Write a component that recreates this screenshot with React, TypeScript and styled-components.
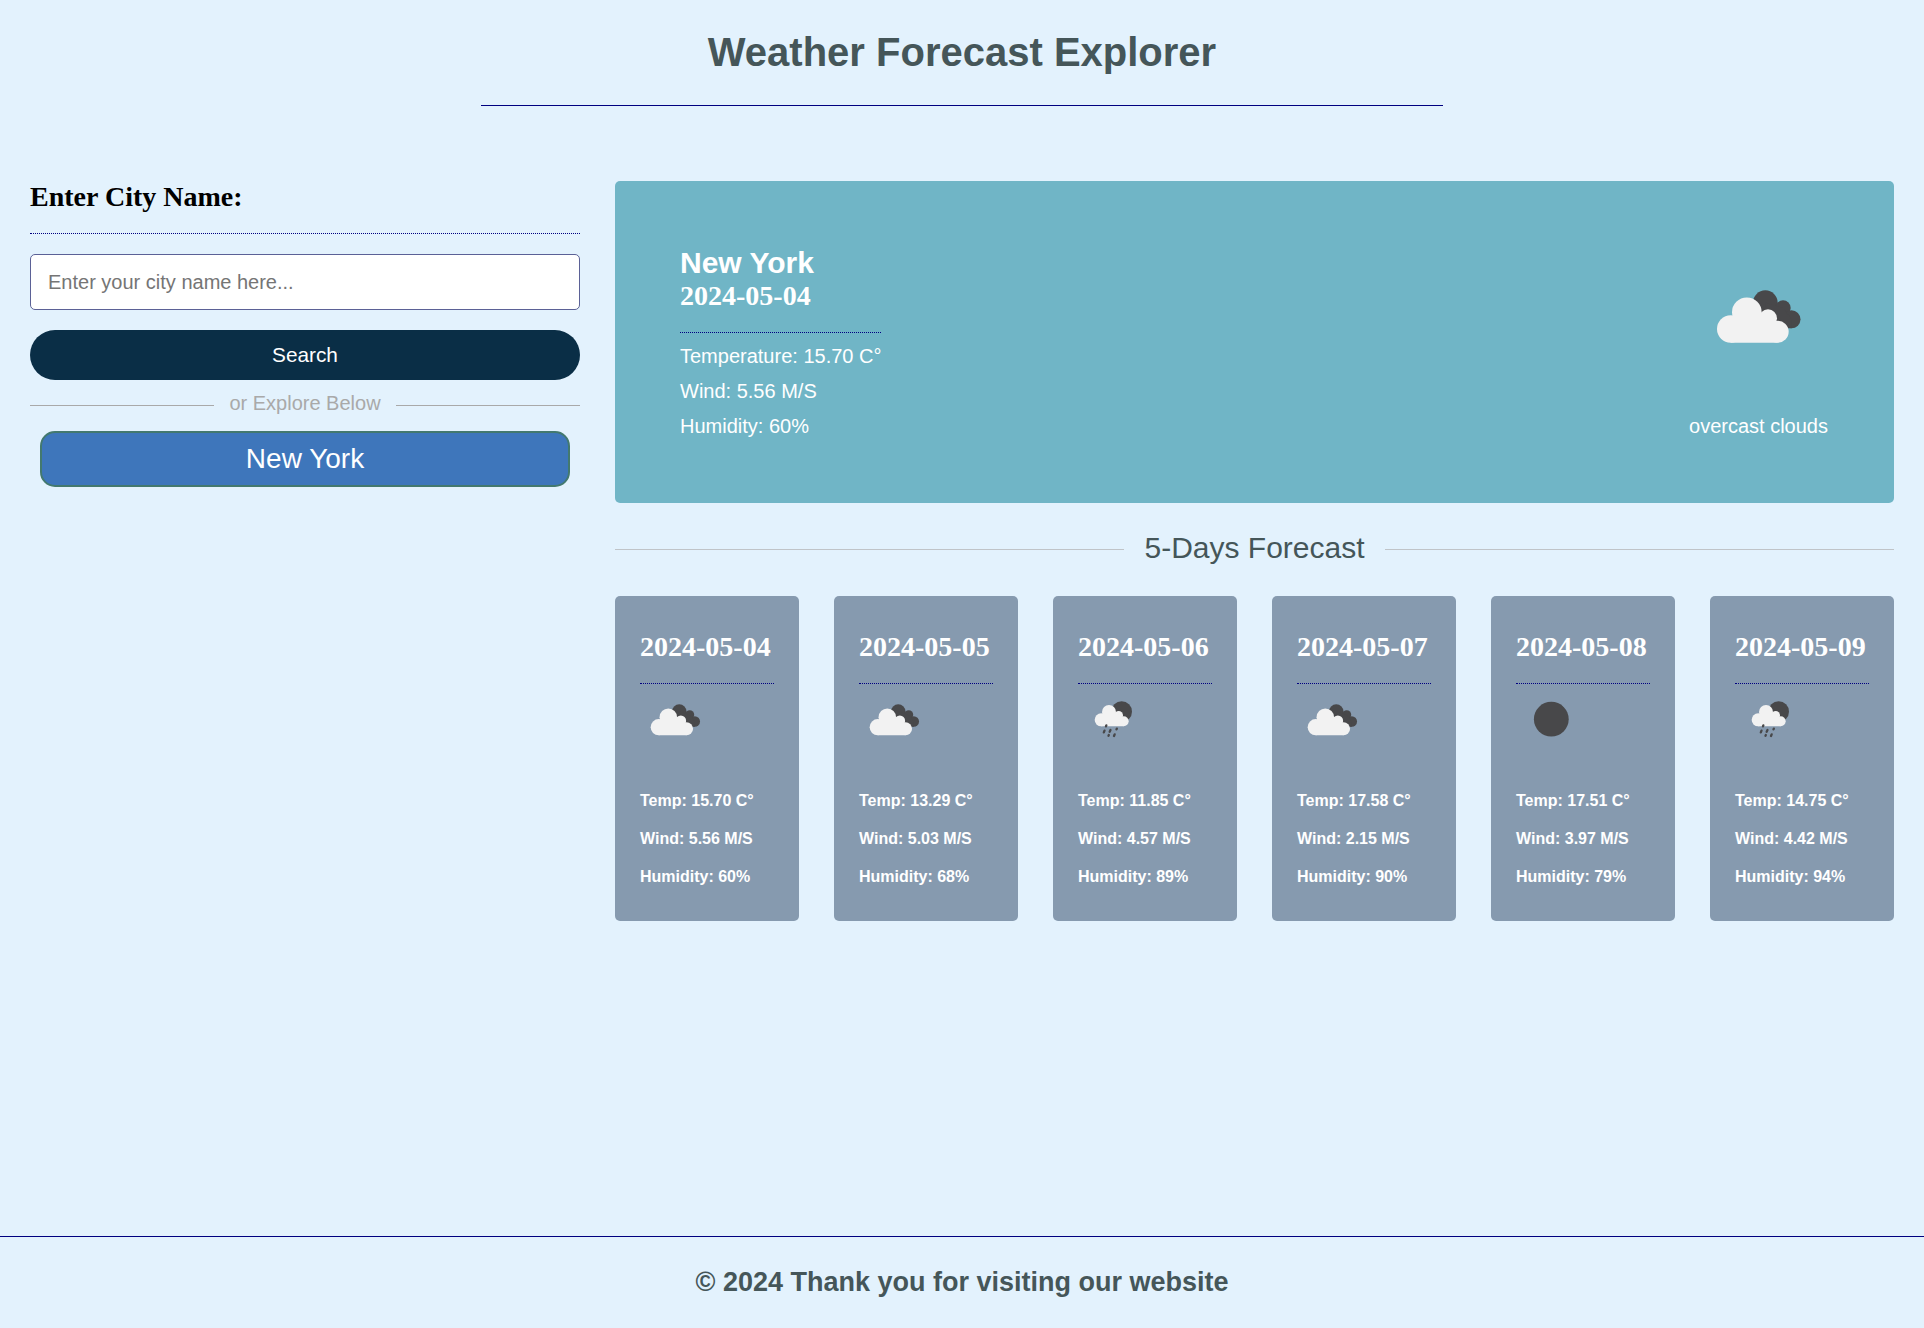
import React from 'react';
import styled, { createGlobalStyle } from 'styled-components';

const GlobalStyle = createGlobalStyle`
  * { box-sizing: border-box; margin: 0; padding: 0; }
  body {
    background: #e3f2fd;
    font-family: "Liberation Sans", Arial, sans-serif;
  }
`;

const Page = styled.div`
  display: flex;
  flex-direction: column;
  min-height: 100vh;
`;

const Header = styled.header`
  width: 50%;
  margin: 0 auto;
  padding: 29px 0 30px;
  border-bottom: 1px solid #000080;
  text-align: center;
`;

const Title = styled.h1`
  font-size: 40px;
  line-height: 46px;
  color: #455659;
  white-space: nowrap;
`;

const Content = styled.main`
  flex: 1;
  display: grid;
  grid-template-columns: 550px 1fr;
  align-items: start;
  gap: 35px;
  padding: 75px 30px 0;
`;

const SearchPanel = styled.aside`
  display: flex;
  flex-direction: column;
`;

const SerifHeading = styled.h2<{ $color?: string }>`
  font-family: "Liberation Serif", "Times New Roman", serif;
  font-size: 28px;
  line-height: 32px;
  padding-bottom: 20px;
  border-bottom: 1px dotted #000080;
  color: ${(p) => p.$color ?? '#fff'};
  white-space: nowrap;
`;

const CityInput = styled.input`
  height: 56px;
  margin: 20px 0;
  padding: 0 17px;
  border: 1px solid #5b6196;
  border-radius: 5px;
  background: #fff;
  font: 20px "Liberation Sans", Arial, sans-serif;
  &::placeholder { color: #757575; }
`;

const SearchButton = styled.button`
  height: 50px;
  border: none;
  border-radius: 25px;
  background: #0a2e46;
  color: #fff;
  font: 20.8px "Liberation Sans", Arial, sans-serif;
`;

const Divider = styled.div<{ $height: number; $line: string; $gap: number }>`
  display: flex;
  align-items: center;
  gap: ${(p) => p.$gap}px;
  height: ${(p) => p.$height}px;
  &::before, &::after {
    content: '';
    flex: 1;
    height: 1px;
    background: ${(p) => p.$line};
  }
`;

const ExploreLabel = styled.span`
  padding-bottom: 4px;
  font-size: 20px;
  color: #a9a9a9;
`;

const ForecastLabel = styled.span`
  padding-bottom: 3px;
  font-size: 30px;
  line-height: 34px;
  color: #455659;
`;

const CityButton = styled.button`
  height: 56px;
  margin: 0 10px;
  border: 2px solid #43796f;
  border-radius: 15px;
  background: #3e76bb;
  color: #fff;
  font: 28px "Liberation Sans", Arial, sans-serif;
`;

const Current = styled.section`
  display: flex;
  justify-content: space-between;
  height: 322px;
  padding: 65px 66px 65px 65px;
  border-radius: 5px;
  background: #70b5c6;
  color: #fff;
`;

const CityName = styled.h2`
  font-size: 30px;
  line-height: 34px;
`;

const Readings = styled.div`
  display: flex;
  flex-direction: column;
  gap: 12px;
  margin-top: 12px;
  font-size: 20px;
  line-height: 23px;
`;

const Condition = styled.div`
  display: flex;
  flex-direction: column;
  align-items: center;
  justify-content: space-between;
  padding-top: 10px;
  font-size: 20px;
  line-height: 23px;
`;

const Days = styled.section`
  display: grid;
  grid-template-columns: repeat(6, 1fr);
  gap: 35px;
`;

const DayCard = styled.article`
  display: flex;
  flex-direction: column;
  height: 325px;
  padding: 35px 25px;
  border-radius: 5px;
  background: #869aaf;
  color: #fff;
`;

const DayReadings = styled.div`
  display: flex;
  flex-direction: column;
  gap: 20px;
  margin-top: auto;
  font-size: 16px;
  font-weight: bold;
  line-height: 18px;
`;

const Icon = styled.svg<{ $size: number }>`
  display: block;
  flex: none;
  width: ${(p) => p.$size}px;
  height: ${(p) => p.$size}px;
`;

const Footer = styled.footer`
  height: 92px;
  padding-top: 29px;
  border-top: 1px solid #000080;
  text-align: center;
  font-size: 27px;
  font-weight: bold;
  line-height: 32px;
  color: #455659;
`;

type Kind = 'clouds' | 'rain' | 'clear';

const DARK = '#48484a';
const LIGHT = '#f2f2f2';

function WeatherIcon({ kind, size }: { kind: Kind; size: number }) {
  if (kind === 'clouds') {
    return (
      <Icon $size={size} viewBox="178 18 360 360">
        <g fill={DARK}>
          <circle cx="377" cy="158" r="37" />
          <circle cx="430" cy="174" r="23" />
          <circle cx="455.500" cy="208" r="27" />
          <path d="M377 158L430 174L456 208V235H414L377 195Z" />
        </g>
        <g fill={LIGHT}>
          <circle cx="273" cy="237" r="41" />
          <circle cx="321.500" cy="187" r="44.500" />
          <circle cx="385" cy="205" r="27" />
          <circle cx="414" cy="245" r="33" />
          <path d="M273 278V230L300 190H350L385 200L414 245V278Z" />
        </g>
      </Icon>
    );
  }
  if (kind === 'rain') {
    return (
      <Icon $size={size} viewBox="114 521 213 213">
        <circle cx="245" cy="604" r="31" fill={DARK} />
        <g fill={LIGHT}>
          <circle cx="183.5" cy="628.5" r="19.5" />
          <circle cx="207" cy="605" r="21" />
          <circle cx="236" cy="615" r="13" />
          <circle cx="251" cy="633" r="15" />
          <path d="M183 648V620L200 605H220L236 612L251 630V648Z" />
        </g>
        <g stroke={DARK} strokeWidth="7" strokeLinecap="round">
          <path d="M199 645L198 648M193.500 661L191.500 666M211.500 659L209 664M230.500 655L229.500 657M206.500 674L205.500 676M224 672L222 677" />
        </g>
      </Icon>
    );
  }
  return (
    <Icon $size={size} viewBox="0 0 71 71">
      <circle cx="35.300" cy="35.200" r="17.400" fill={DARK} />
    </Icon>
  );
}

const days: { date: string; kind: Kind; temp: string; wind: string; humidity: number }[] = [
  { date: '2024-05-04', kind: 'clouds', temp: '15.70', wind: '5.56', humidity: 60 },
  { date: '2024-05-05', kind: 'clouds', temp: '13.29', wind: '5.03', humidity: 68 },
  { date: '2024-05-06', kind: 'rain', temp: '11.85', wind: '4.57', humidity: 89 },
  { date: '2024-05-07', kind: 'clouds', temp: '17.58', wind: '2.15', humidity: 90 },
  { date: '2024-05-08', kind: 'clear', temp: '17.51', wind: '3.97', humidity: 79 },
  { date: '2024-05-09', kind: 'rain', temp: '14.75', wind: '4.42', humidity: 94 },
];

export default function App() {
  return (
    <Page>
      <GlobalStyle />
      <Header>
        <Title>Weather Forecast Explorer</Title>
      </Header>
      <Content>
        <SearchPanel>
          <SerifHeading $color="#000">Enter City Name:</SerifHeading>
          <CityInput placeholder="Enter your city name here..." />
          <SearchButton>Search</SearchButton>
          <Divider $height={51} $line="#a9a9a9" $gap={15.5}>
            <ExploreLabel>or Explore Below</ExploreLabel>
          </Divider>
          <CityButton>New York</CityButton>
        </SearchPanel>
        <div>
          <Current>
            <div>
              <CityName>New York</CityName>
              <SerifHeading>2024-05-04</SerifHeading>
              <Readings>
                <p>Temperature: 15.70 C°</p>
                <p>Wind: 5.56 M/S</p>
                <p>Humidity: 60%</p>
              </Readings>
            </div>
            <Condition>
              <WeatherIcon kind="clouds" size={120} />
              <p>overcast clouds</p>
            </Condition>
          </Current>
          <Divider $height={93} $line="#c0c4c8" $gap={20}>
            <ForecastLabel>5-Days Forecast</ForecastLabel>
          </Divider>
          <Days>
            {days.map((d) => (
              <DayCard key={d.date}>
                <SerifHeading>{d.date}</SerifHeading>
                <WeatherIcon kind={d.kind} size={71} />
                <DayReadings>
                  <p>Temp: {d.temp} C°</p>
                  <p>Wind: {d.wind} M/S</p>
                  <p>Humidity: {d.humidity}%</p>
                </DayReadings>
              </DayCard>
            ))}
          </Days>
        </div>
      </Content>
      <Footer>© 2024 Thank you for visiting our website</Footer>
    </Page>
  );
}
